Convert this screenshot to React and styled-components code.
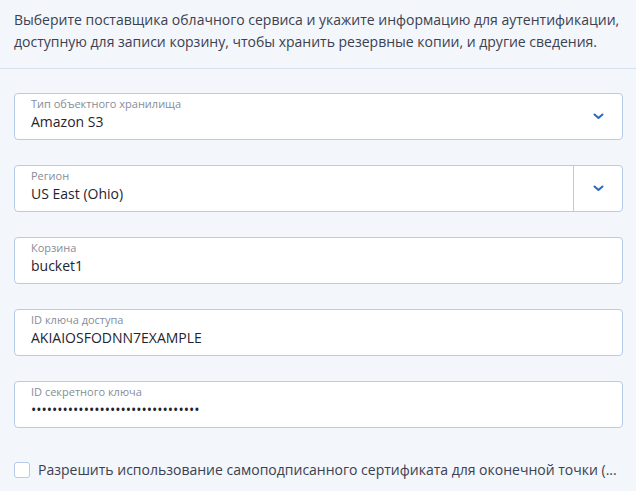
import React from "react";
import styled, { createGlobalStyle } from "styled-components";

const GlobalStyle = createGlobalStyle`
  html, body {
    margin: 0;
    background: #f3f6fb;
    font-family: "Open Sans", "Noto Sans", sans-serif;
  }
`;

const Chevron = () => (
  <svg width="11" height="7" viewBox="0 0 11 7" fill="none">
    <path d="M1.5 1.5 L5.5 5 L9.5 1.5" stroke="#2a67c4" strokeWidth="2" strokeLinecap="round" strokeLinejoin="round" />
  </svg>
);

const fields = [
  { label: "Тип объектного хранилища", value: "Amazon S3", kind: "select" },
  { label: "Регион", value: "US East (Ohio)", kind: "split" },
  { label: "Корзина", value: "bucket1" },
  { label: "ID ключа доступа", value: "AKIAIOSFODNN7EXAMPLE" },
  { label: "ID секретного ключа", value: "•".repeat(32) },
];

export default function App() {
  return (
    <Page>
      <GlobalStyle />
      <Intro>
        Выберите поставщика облачного сервиса и укажите информацию для аутентификации,
        доступную для записи корзину, чтобы хранить резервные копии, и другие сведения.
      </Intro>
      <Divider />
      <Form>
        {fields.map((f) => (
          <Field key={f.label}>
            <FieldBody>
              <Label>{f.label}</Label>
              <Value>{f.value}</Value>
            </FieldBody>
            {f.kind && (
              <Toggle $split={f.kind === "split"}>
                <Chevron />
              </Toggle>
            )}
          </Field>
        ))}
        <CheckRow>
          <Box />
          <CheckText>
            Разрешить использование самоподписанного сертификата для оконечной точки (...
          </CheckText>
        </CheckRow>
      </Form>
    </Page>
  );
}

const Page = styled.div`
  width: 636px;
  min-height: 491px;
`;

const Intro = styled.p`
  margin: 0;
  padding: 9px 12px 15px 14px;
  font-size: 14px;
  line-height: 22px;
  color: #3b4150;
`;

const Divider = styled.div`
  height: 1px;
  background: #d7e1ef;
`;

const Form = styled.div`
  display: flex;
  flex-direction: column;
  gap: 25px;
  padding: 24px 13px 0 14px;
`;

const Field = styled.div`
  display: flex;
  height: 47px;
  box-sizing: border-box;
  border: 1px solid #b6cbe8;
  border-radius: 4px;
  background: #fff;
`;

const FieldBody = styled.div`
  flex: 1;
  display: flex;
  flex-direction: column;
  padding: 2px 16px 0 16px;
`;

const Label = styled.div`
  font-size: 11px;
  line-height: 15px;
  color: #868d99;
`;

const Value = styled.div`
  font-size: 14px;
  line-height: 22px;
  color: #1f2430;
`;

const Toggle = styled.div`
  width: 48px;
  display: flex;
  align-items: center;
  justify-content: center;
  border-left: ${(p) => (p.$split ? "1px solid #b6cbe8" : "none")};
`;

const CheckRow = styled.div`
  display: flex;
  align-items: center;
  gap: 8px;
  margin-top: 7px;
`;

const Box = styled.div`
  width: 16px;
  height: 16px;
  box-sizing: border-box;
  border: 1px solid #b6cbe8;
  border-radius: 3px;
  background: #fff;
  flex-shrink: 0;
`;

const CheckText = styled.div`
  font-size: 14px;
  color: #3b4150;
  white-space: nowrap;
`;
